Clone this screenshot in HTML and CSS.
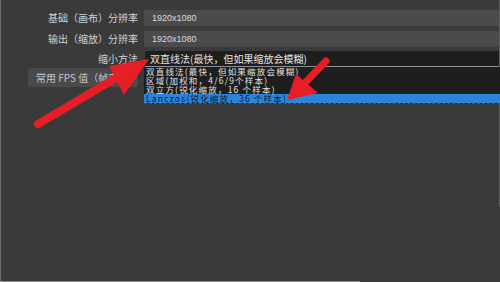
FILE: index.html
```html
<!DOCTYPE html>
<html>
<head>
    <title>视频设置</title>
    <link rel="stylesheet" href="styles.css">
</head>
<body>
    <div id="settings">
        <div class="row">
            <div class="label">基础（画布）分辨率</div>
            <div class="field">1920x1080</div>
        </div>
        <div class="row row-second">
            <div class="label">输出（缩放）分辨率</div>
            <div class="field">1920x1080</div>
        </div>
        <div class="row row-combo">
            <div class="label">缩小方法</div>
            <div class="combo">
                <div class="combo-current">双直线法(最快，但如果缩放会模糊)</div>
                <div class="combo-list">
                    <div class="combo-item">双直线法(最快，但如果缩放会模糊)</div>
                    <div class="combo-item">区域(加权和，4/6/9个样本)</div>
                    <div class="combo-item">双立方(锐化缩放，16 个样本)</div>
                    <div class="combo-item selected">Lanczos(锐化缩放，36 个样本)</div>
                </div>
            </div>
        </div>
        <div class="row row-button">
            <div class="label">
                <button class="fps-button">常用 FPS 值（帧率）</button>
            </div>
        </div>
    </div>

    <div class="edge-right"></div>
    <div class="edge-bottom"></div>

    <!-- red annotation arrows -->
    <svg class="arrows" width="500" height="282" viewBox="0 0 500 282">
        <line x1="38" y1="124" x2="128" y2="71" stroke="#e81e26" stroke-width="8" stroke-linecap="round"/>
        <polygon points="149,59 109,66 124,95" fill="#e81e26"/>
        <line x1="326" y1="61" x2="303" y2="85" stroke="#e81e26" stroke-width="7" stroke-linecap="round"/>
        <polygon points="287,100 296,74 318,93" fill="#e81e26"/>
    </svg>
</body>
</html>
```

FILE: styles.css
```css
body {
    margin: 0;
    width: 500px;
    height: 282px;
    overflow: hidden;
    position: relative;
    background-color: #3a3a3a;
    font-family: "Noto Sans CJK SC", "Liberation Sans", sans-serif;
}

#settings {
    height: 282px;
    box-sizing: border-box;
    padding-top: 10px;
    border-left: 1px solid #6c6c6c;
}

.row {
    display: flex;
    align-items: center;
    gap: 6px;
    height: 16px;
    margin-bottom: 5px;
}

.row-second {
    margin-bottom: 4px;
}

.row-combo {
    height: 16px;
    margin-bottom: 1px;
}

.row-button {
    height: 19px;
}

.label {
    width: 137px;
    flex-shrink: 0;
    text-align: right;
    color: #d2d2d2;
    font-size: 10px;
    line-height: 16px;
}

.field {
    flex: 1;
    height: 16px;
    background-color: #4b4b4b;
    color: #dcdcdc;
    padding-left: 8px;
    font-family: "Liberation Sans", sans-serif;
    font-size: 9px;
    line-height: 16px;
}

.combo {
    flex: 1;
    position: relative;
    height: 16px;
}

.combo-current {
    height: 15px;
    margin-left: 1px;
    background-color: #1e1e1e;
    border-bottom: 1px solid #8a9098;
    color: #e2e2e2;
    padding-left: 5px;
    font-size: 10px;
    line-height: 15px;
    white-space: nowrap;
}

.combo-list {
    position: absolute;
    top: 16px;
    left: 0;
    right: 0;
    background-color: #1e1e1e;
    border-bottom: 1px dashed #555555;
    z-index: 2;
}

.combo-item {
    height: 9px;
    padding-left: 2px;
    color: #e0e0e0;
    font-size: 8.5px;
    letter-spacing: 1.2px;
    line-height: 9px;
    white-space: nowrap;
}

.combo-item.selected {
    background-color: #2b84dc;
    color: #0e1a2a;
}

.fps-button {
    display: block;
    margin-left: 27px;
    width: 110px;
    height: 19px;
    padding: 0 0 0 8px;
    border: none;
    border-radius: 3px;
    background-color: #4a4a4a;
    color: #c6c6c6;
    font-family: "Noto Sans CJK SC", "Liberation Sans", sans-serif;
    font-size: 10px;
    text-align: left;
    white-space: nowrap;
    overflow: hidden;
}

.edge-right {
    position: absolute;
    top: 0;
    right: 0;
    width: 1px;
    height: 207px;
    background-color: #5e5e5e;
}

.edge-bottom {
    position: absolute;
    left: 0;
    bottom: 0;
    width: 360px;
    height: 1px;
    background-color: #8a8a8a;
}

.arrows {
    position: absolute;
    top: 0;
    left: 0;
    z-index: 5;
}
```
